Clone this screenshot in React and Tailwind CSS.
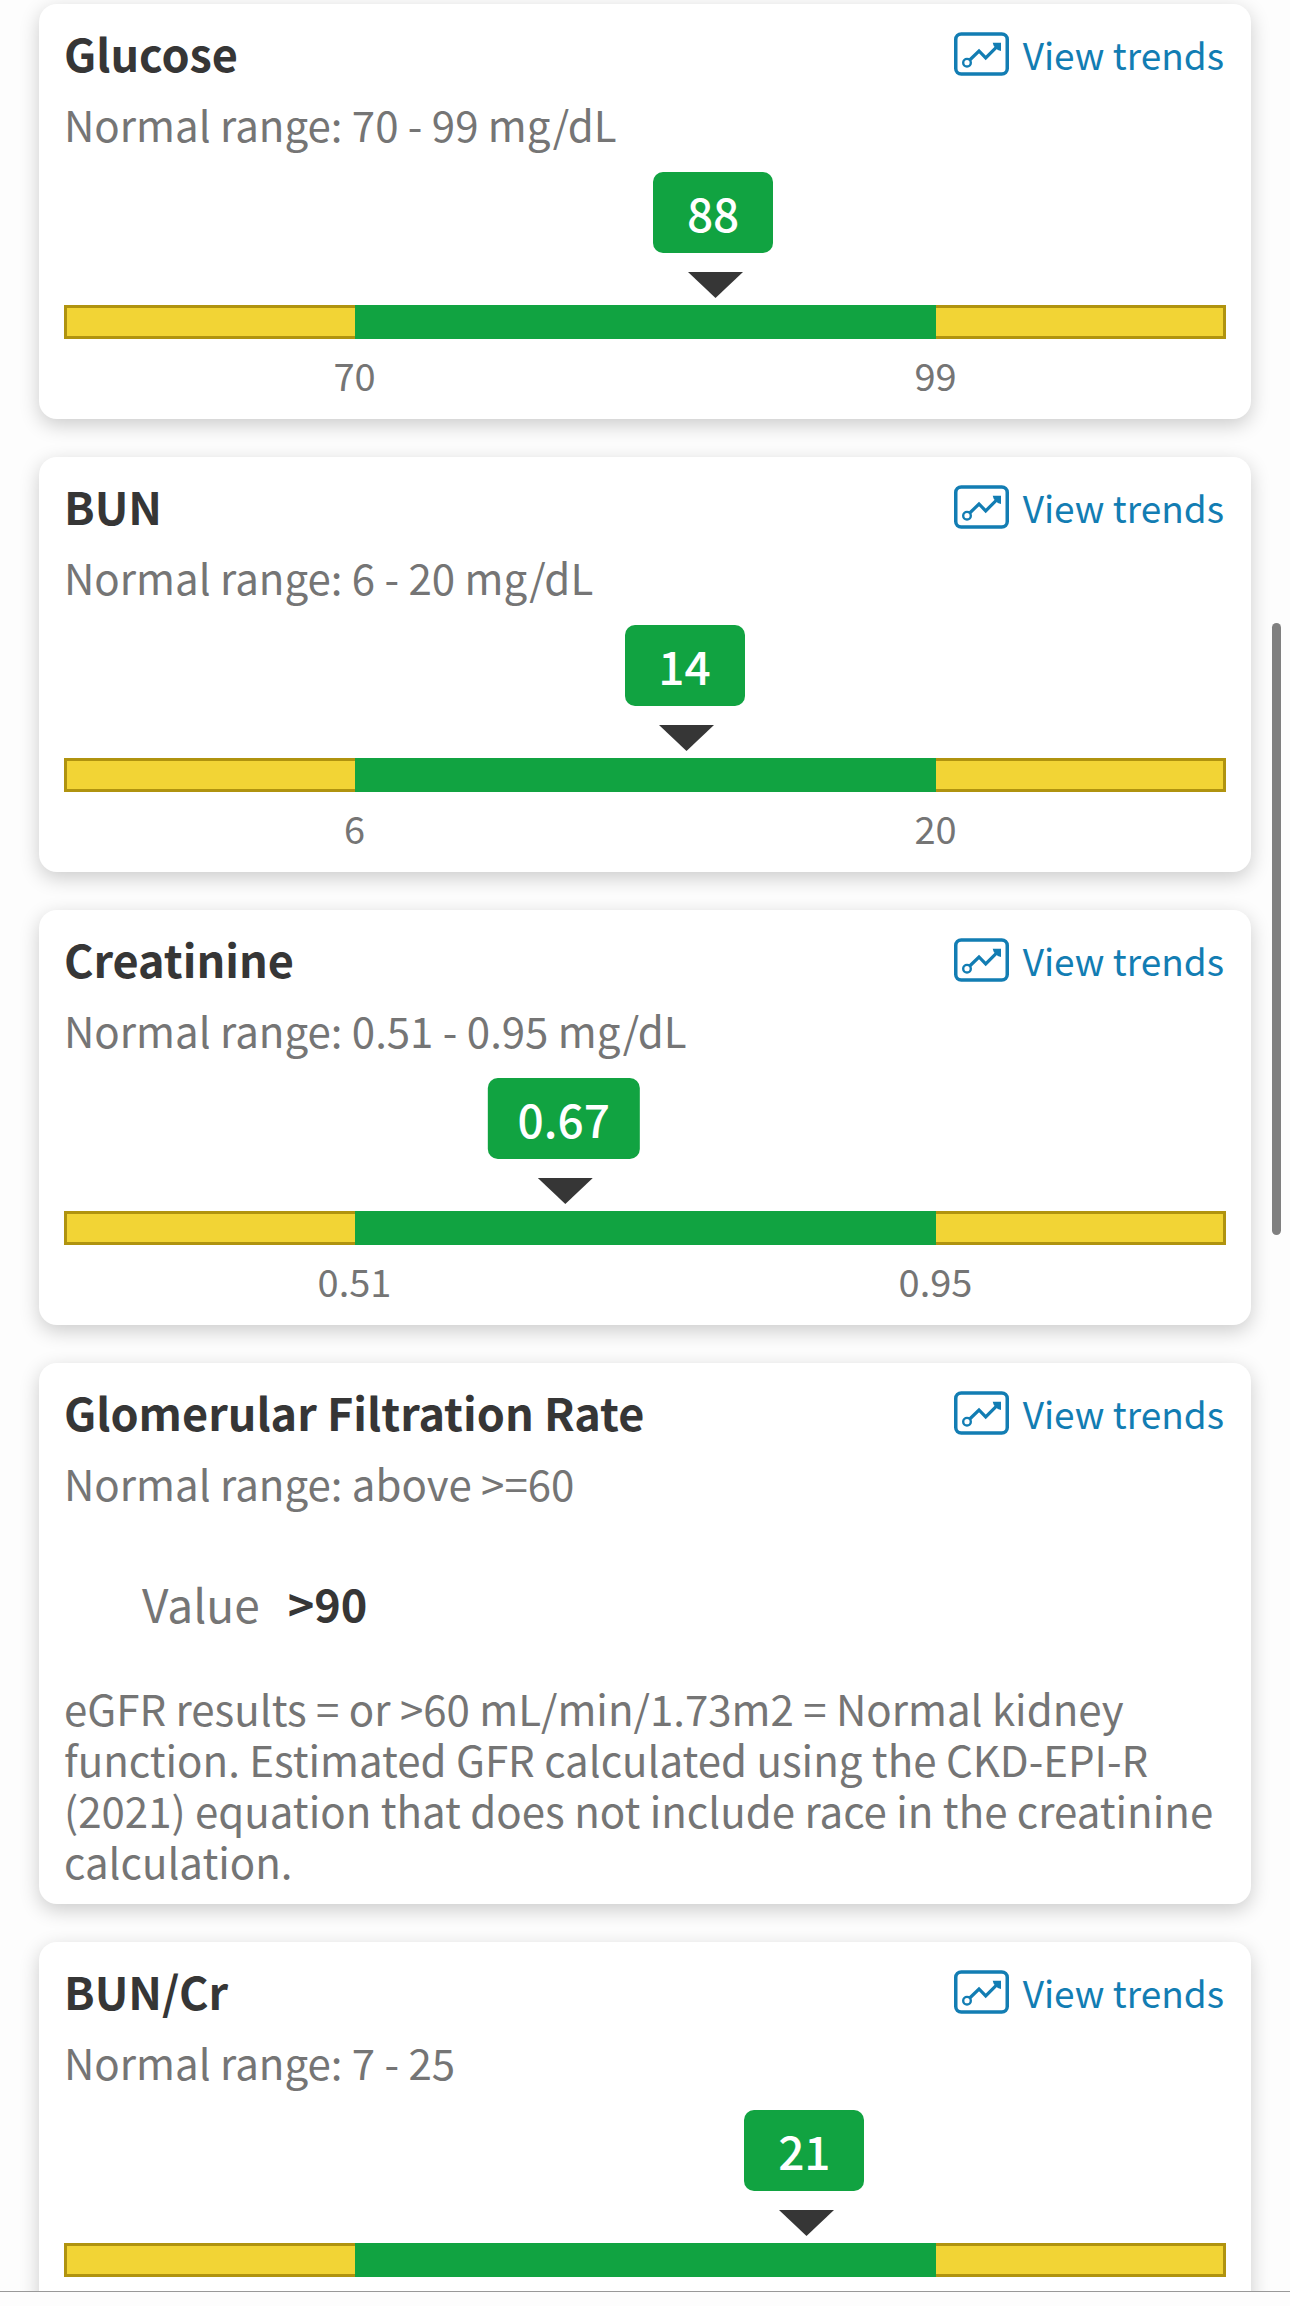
const results = [
  { name: "Glucose", range: "70 - 99 mg/dL", value: "88", low: 70, high: 99, showTicks: true },
  { name: "BUN", range: "6 - 20 mg/dL", value: "14", low: 6, high: 20, showTicks: true },
  { name: "Creatinine", range: "0.51 - 0.95 mg/dL", value: "0.67", low: 0.51, high: 0.95, showTicks: true },
  {
    name: "Glomerular Filtration Rate",
    range: "above >=60",
    value: ">90",
    note: "eGFR results = or >60 mL/min/1.73m2 = Normal kidney function. Estimated GFR calculated using the CKD-EPI-R (2021) equation that does not include race in the creatinine calculation.",
  },
  { name: "BUN/Cr", range: "7 - 25", value: "21", low: 7, high: 25, showTicks: false },
];

function TrendIcon() {
  return (
    <svg className="h-11 w-[55px] shrink-0" viewBox="0 0 55 44" fill="none" stroke="currentColor" aria-hidden="true">
      <rect x="1.75" y="2" width="51.5" height="40" rx="5.5" strokeWidth="3.5" />
      <circle cx="13" cy="30.7" r="3.8" strokeWidth="2.4" />
      <path d="M15.7 28 25 19l6.7 6.9L44 13.6" strokeWidth="3.2" />
      <path d="M38.7 10.8H47v8.3l-3.2-1.2-4-4z" fill="currentColor" stroke="none" />
    </svg>
  );
}

// The normal range fills the middle half of the bar.
function markerPosition({ value, low, high }) {
  return 25 + (50 * (Number(value) - low)) / (high - low);
}

function RangeChart({ result }) {
  return (
    <div className="mt-[23px] pb-0.5">
      <div
        className="flex w-max -translate-x-1/2 flex-col items-center"
        style={{ marginLeft: `${markerPosition(result)}%` }}
      >
        <span className="mr-1 min-w-[120px] rounded-[10px] bg-[#11a341] px-[30px] py-[10px] text-center text-[46px] leading-[61px] font-medium text-white">
          {result.value}
        </span>
        <svg className="mt-[19px] h-[26px] w-[55px]" viewBox="0 0 55 26" aria-hidden="true">
          <path d="M0 0h55L27.5 26z" fill="#363636" />
        </svg>
      </div>
      <div className="mt-[7px] flex h-[34px]">
        <div className="w-1/4 border-3 border-r-0 border-[#b0930f] bg-[#f2d435]" />
        <div className="w-1/2 bg-[#11a341]" />
        <div className="w-1/4 border-3 border-l-0 border-[#b0930f] bg-[#f2d435]" />
      </div>
      <div className="mt-3 grid min-h-12 grid-cols-2 text-center text-[38px] leading-[48px] text-[#757575]">
        {result.showTicks && (
          <>
            <span>{result.low}</span>
            <span>{result.high}</span>
          </>
        )}
      </div>
    </div>
  );
}

function ResultCard({ result }) {
  return (
    <section className="shrink-0 rounded-[18px] bg-white px-[25px] pt-[19px] pb-[18px] shadow-[0_6px_20px_rgba(0,0,0,0.2)]">
      <div className="flex h-[60px] items-center justify-between">
        <h2 className="text-[45px] leading-[60px] font-bold text-[#363636]">{result.name}</h2>
        <a href="#trends" className="mt-0.5 flex items-center gap-[14px] pr-0.5 text-[37px] leading-[60px] text-[#127db3]">
          <TrendIcon />
          View trends
        </a>
      </div>
      <p className="mt-[15px] text-[42px] leading-[51px] text-[#757575]">Normal range: {result.range}</p>
      {result.note ? (
        <>
          <p className="mt-[65px] flex gap-7 pl-[78px] text-[46px] leading-[60px]">
            <span className="text-[#757575]">Value</span>
            <span className="text-[45px] font-bold text-[#363636]">{result.value}</span>
          </p>
          <p className="mt-[49px] text-[42px] leading-[51px] text-[#757575]">{result.note}</p>
        </>
      ) : (
        <RangeChart result={result} />
      )}
    </section>
  );
}

export default function App() {
  return (
    <div className="relative flex h-screen flex-col bg-[#fdfdfd] font-['Noto_Sans_CJK_SC','Noto_Sans',sans-serif]">
      <main className="flex min-h-0 flex-1 flex-col gap-[38px] overflow-hidden px-[39px] pt-1">
        {results.map((result) => (
          <ResultCard key={result.name} result={result} />
        ))}
      </main>
      <footer className="h-[15px] shrink-0 border-t border-[#999999] bg-[#fdfdfd]" />
      <div className="absolute top-[27%] right-[9px] h-[612px] w-[9px] rounded-full bg-[#808080]" />
    </div>
  );
}
